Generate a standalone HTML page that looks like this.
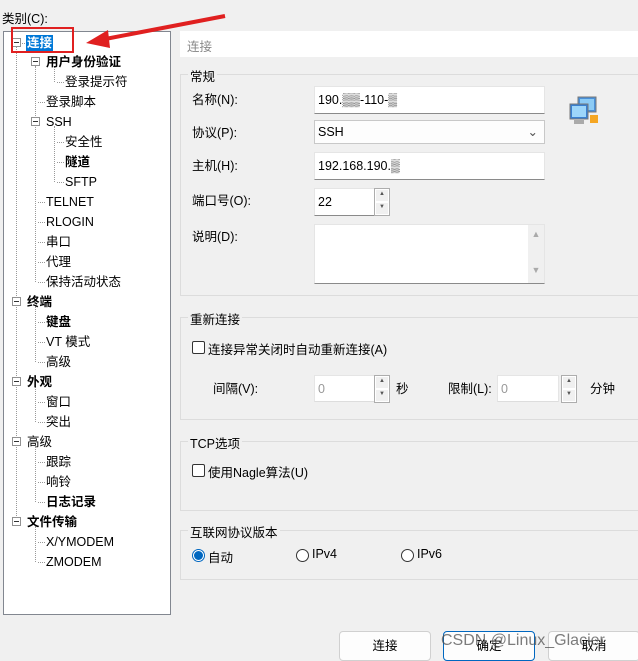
<!DOCTYPE html>
<html><head><meta charset="utf-8"><style>
*{box-sizing:border-box}
body{margin:0;width:638px;height:659px;background:#f0f0f0;font-family:"Liberation Sans","Noto Sans CJK SC",sans-serif;font-size:12.5px;color:#000;position:relative;overflow:hidden}
.a{position:absolute;white-space:nowrap}
.tree{position:absolute;left:3px;top:31px;width:168px;height:584px;background:#fff;border:1px solid #828790}
.t{position:absolute;white-space:nowrap;line-height:16px}
.b{font-weight:bold}
.pm{position:absolute;width:9px;height:9px;border:1px solid #919191;background:#fff;z-index:2}
.pm:after{content:"";position:absolute;left:1px;top:3px;width:5px;height:1px;background:#333}
.vl{position:absolute;border-left:1px dotted #999;width:0}
.hl{position:absolute;border-top:1px dotted #999;height:0}
.grp{position:absolute;border:1px solid #dcdcdc;border-right:none}
.grp span{position:absolute;left:7px;top:-9px;background:#f0f0f0;padding:0 2px}
.in{position:absolute;background:#fff;border:1px solid #e5e5e5;border-bottom:1px solid #8a8a8a;padding-left:3px;line-height:26px}
.spin{position:absolute;width:16px;border:1px solid #adadad;background:#f0f0f0}
.spin div{height:50%;border:1px solid #fff;font-size:6px;text-align:center;color:#555;line-height:9px}
.cb{position:absolute;width:13px;height:13px;border:1px solid #333;border-radius:2px;background:#fff}
.rb{position:absolute;width:13px;height:13px;border:1px solid #333;border-radius:50%;background:#fff}
.btn{position:absolute;top:631px;height:30px;background:#fdfdfd;border:1px solid #d0d0d0;border-radius:4px;text-align:center;line-height:28px}
</style></head><body>
<div class="a" style="left:2px;top:8px">类别(C):</div>
<div class="tree"></div>
<div class="vl" style="left:16px;top:47px;height:475px"></div>
<div class="vl" style="left:35px;top:66px;height:216px"></div>
<div class="vl" style="left:54px;top:66px;height:16px"></div>
<div class="vl" style="left:54px;top:126px;height:56px"></div>
<div class="vl" style="left:35px;top:306px;height:56px"></div>
<div class="vl" style="left:35px;top:386px;height:36px"></div>
<div class="vl" style="left:35px;top:446px;height:56px"></div>
<div class="vl" style="left:35px;top:526px;height:36px"></div>
<div class="pm" style="left:12px;top:38px"></div>
<div class="hl" style="left:22px;top:43px;width:5px"></div>
<div class="a" style="left:26px;top:35px;background:#0078d7;color:#fff;font-weight:bold;padding:0 1px;line-height:16px">连接</div>
<div style="position:absolute;left:11px;top:27px;width:63px;height:26px;border:2px solid #e02020;z-index:3"></div>
<svg class="a" style="left:80px;top:10px" width="150" height="40"><line x1="145" y1="6" x2="20" y2="30" stroke="#e02020" stroke-width="4"/><polygon points="6,33 28,20 30,38" fill="#e02020"/></svg>
<div class="pm" style="left:31px;top:57px"></div>
<div class="t b" style="left:46px;top:54px">用户身份验证</div>
<div class="hl" style="left:57px;top:82px;width:7px"></div><div class="t" style="left:65px;top:74px">登录提示符</div>
<div class="hl" style="left:38px;top:102px;width:7px"></div><div class="t" style="left:46px;top:94px">登录脚本</div>
<div class="pm" style="left:31px;top:117px"></div><div class="t" style="left:46px;top:114px">SSH</div>
<div class="hl" style="left:57px;top:142px;width:7px"></div><div class="t" style="left:65px;top:134px">安全性</div>
<div class="hl" style="left:57px;top:162px;width:7px"></div><div class="t b" style="left:65px;top:154px">隧道</div>
<div class="hl" style="left:57px;top:182px;width:7px"></div><div class="t" style="left:65px;top:174px">SFTP</div>
<div class="hl" style="left:38px;top:202px;width:7px"></div><div class="t" style="left:46px;top:194px">TELNET</div>
<div class="hl" style="left:38px;top:222px;width:7px"></div><div class="t" style="left:46px;top:214px">RLOGIN</div>
<div class="hl" style="left:38px;top:242px;width:7px"></div><div class="t" style="left:46px;top:234px">串口</div>
<div class="hl" style="left:38px;top:262px;width:7px"></div><div class="t" style="left:46px;top:254px">代理</div>
<div class="hl" style="left:38px;top:282px;width:7px"></div><div class="t" style="left:46px;top:274px">保持活动状态</div>
<div class="pm" style="left:12px;top:297px"></div><div class="t b" style="left:27px;top:294px">终端</div>
<div class="hl" style="left:38px;top:322px;width:7px"></div><div class="t b" style="left:46px;top:314px">键盘</div>
<div class="hl" style="left:38px;top:342px;width:7px"></div><div class="t" style="left:46px;top:334px">VT 模式</div>
<div class="hl" style="left:38px;top:362px;width:7px"></div><div class="t" style="left:46px;top:354px">高级</div>
<div class="pm" style="left:12px;top:377px"></div><div class="t b" style="left:27px;top:374px">外观</div>
<div class="hl" style="left:38px;top:402px;width:7px"></div><div class="t" style="left:46px;top:394px">窗口</div>
<div class="hl" style="left:38px;top:422px;width:7px"></div><div class="t" style="left:46px;top:414px">突出</div>
<div class="pm" style="left:12px;top:437px"></div><div class="t" style="left:27px;top:434px">高级</div>
<div class="hl" style="left:38px;top:462px;width:7px"></div><div class="t" style="left:46px;top:454px">跟踪</div>
<div class="hl" style="left:38px;top:482px;width:7px"></div><div class="t" style="left:46px;top:474px">响铃</div>
<div class="hl" style="left:38px;top:502px;width:7px"></div><div class="t b" style="left:46px;top:494px">日志记录</div>
<div class="pm" style="left:12px;top:517px"></div><div class="t b" style="left:27px;top:514px">文件传输</div>
<div class="hl" style="left:38px;top:542px;width:7px"></div><div class="t" style="left:46px;top:534px">X/YMODEM</div>
<div class="hl" style="left:38px;top:562px;width:7px"></div><div class="t" style="left:46px;top:554px">ZMODEM</div>

<div class="a" style="left:180px;top:31px;width:458px;height:26px;background:#fff;color:#888;padding:5px 7px">连接</div>

<div class="grp" style="left:180px;top:74px;width:458px;height:222px"><span>常规</span></div>
<div class="a" style="left:192px;top:89px">名称(N):</div>
<div class="in" style="left:314px;top:86px;width:231px;height:28px">190.▒▒-110-▒</div>
<div class="a" style="left:192px;top:122px">协议(P):</div>
<div class="in" style="left:314px;top:120px;width:231px;height:24px;line-height:22px;border:1px solid #c8c8c8;background:#fdfdfd">SSH<span style="position:absolute;right:6px;top:0;color:#555">&#8964;</span></div>
<div class="a" style="left:192px;top:155px">主机(H):</div>
<div class="in" style="left:314px;top:152px;width:231px;height:28px">192.168.190.▒</div>
<div class="a" style="left:192px;top:190px">端口号(O):</div>
<div class="in" style="left:314px;top:188px;width:62px;height:28px">22</div>
<div class="spin" style="left:374px;top:188px;height:28px"><div>▲</div><div>▼</div></div>
<div class="a" style="left:192px;top:226px">说明(D):</div>
<div class="in" style="left:314px;top:224px;width:231px;height:60px"></div>
<div class="a" style="left:528px;top:225px;width:16px;height:58px;background:#f0f0f0;color:#aaa;font-size:9px;text-align:center;line-height:18px">▲<br><br>▼</div>
<svg class="a" style="left:568px;top:95px" width="34" height="34"><rect x="10" y="2" width="18" height="15" fill="#4a90d9" stroke="#777"/><rect x="12" y="4" width="14" height="11" fill="#8ccbf5"/><rect x="2" y="9" width="18" height="15" fill="#3a80d0" stroke="#777"/><rect x="4" y="11" width="14" height="11" fill="#9dd6fa"/><rect x="6" y="25" width="10" height="4" fill="#aaa"/><rect x="22" y="20" width="8" height="8" fill="#f5a623"/></svg>

<div class="grp" style="left:180px;top:317px;width:458px;height:103px"><span>重新连接</span></div>
<div class="cb" style="left:192px;top:341px"></div>
<div class="a" style="left:208px;top:339px">连接异常关闭时自动重新连接(A)</div>
<div class="a" style="left:213px;top:378px">间隔(V):</div>
<div class="in" style="left:314px;top:375px;width:62px;height:27px;color:#999;border-bottom-color:#ddd">0</div>
<div class="spin" style="left:374px;top:375px;height:28px"><div>▲</div><div>▼</div></div>
<div class="a" style="left:396px;top:378px">秒</div>
<div class="a" style="left:448px;top:378px">限制(L):</div>
<div class="in" style="left:497px;top:375px;width:62px;height:27px;color:#999;border-bottom-color:#ddd">0</div>
<div class="spin" style="left:561px;top:375px;height:28px"><div>▲</div><div>▼</div></div>
<div class="a" style="left:590px;top:378px">分钟</div>

<div class="grp" style="left:180px;top:441px;width:458px;height:70px"><span>TCP选项</span></div>
<div class="cb" style="left:192px;top:464px"></div>
<div class="a" style="left:208px;top:462px">使用Nagle算法(U)</div>

<div class="grp" style="left:180px;top:530px;width:458px;height:50px"><span>互联网协议版本</span></div>
<div class="rb" style="left:192px;top:549px;border-color:#0067c0;background:#fff"><div style="position:absolute;left:1px;top:1px;width:9px;height:9px;border-radius:50%;background:#0067c0"></div></div>
<div class="a" style="left:208px;top:547px">自动</div>
<div class="rb" style="left:296px;top:549px"></div><div class="a" style="left:312px;top:547px">IPv4</div>
<div class="rb" style="left:401px;top:549px"></div><div class="a" style="left:417px;top:547px">IPv6</div>

<div class="btn" style="left:339px;width:92px">连接</div>
<div class="btn" style="left:443px;width:92px;border:1px solid #0067c0">确定</div>
<div class="btn" style="left:548px;width:92px">取消</div>
<div class="a" style="left:441px;top:632px;font-size:16px;color:rgba(80,80,80,.75)">CSDN @Linux_Glacier</div>
</body></html>
